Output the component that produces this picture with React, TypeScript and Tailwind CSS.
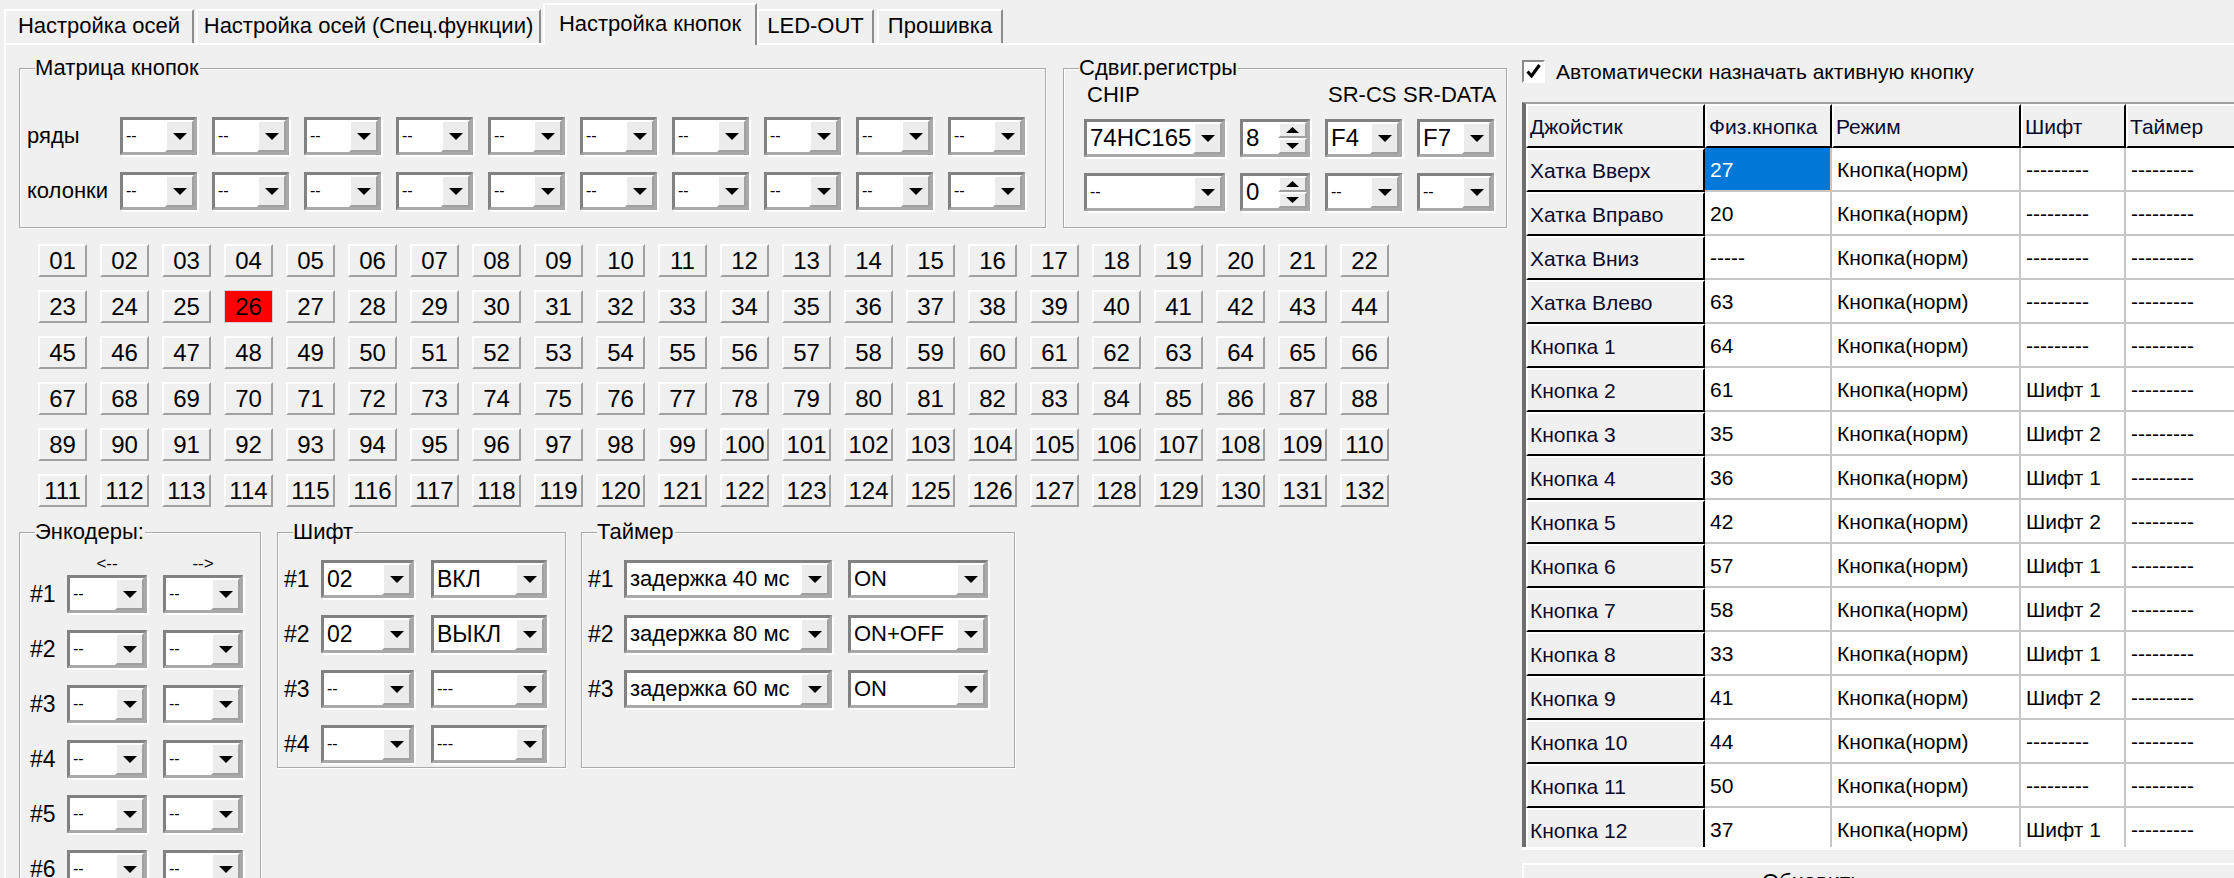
import React from 'react';

const Arrow = () => (
  <svg width="14" height="7" viewBox="0 0 14 7">
    <path d="M0 0h14L7 7z" fill="#000" />
  </svg>
);

function Combo({ w, value = '--', text = 'text-[16px]' }: { w: string; value?: string; text?: string }) {
  return (
    <div
      className={`flex h-[38px] shrink-0 border-[3px] border-[#a9a9a9] border-t-[#818181] border-l-[#818181] bg-white shadow-[2px_2px_0_#ffffff] ${w}`}
    >
      <div className={`flex flex-1 items-center overflow-hidden whitespace-nowrap pl-[3px] ${text}`}>{value}</div>
      <div className="flex w-[29px] shrink-0 items-center justify-center border-2 border-white border-r-[#a0a0a0] border-b-[#a0a0a0] bg-[#ececec]">
        <Arrow />
      </div>
    </div>
  );
}

function Spin({ value }: { value: string }) {
  return (
    <div className="flex h-[38px] w-[70px] shrink-0 border-[3px] border-[#a9a9a9] border-t-[#818181] border-l-[#818181] bg-white shadow-[2px_2px_0_#ffffff]">
      <div className="flex flex-1 items-center pl-[3px] text-[24px]">{value}</div>
      <div className="flex w-[29px] flex-col">
        <div className="flex flex-1 items-center justify-center border-2 border-white border-r-[#a0a0a0] border-b-[#a0a0a0] bg-[#ececec]">
          <svg width="13" height="6" viewBox="0 0 13 6"><path d="M0 6h13L6.5 0z" fill="#000" /></svg>
        </div>
        <div className="flex flex-1 items-center justify-center border-2 border-white border-r-[#a0a0a0] border-b-[#a0a0a0] bg-[#ececec]">
          <svg width="13" height="6" viewBox="0 0 13 6"><path d="M0 0h13L6.5 6z" fill="#000" /></svg>
        </div>
      </div>
    </div>
  );
}

function Group({ label, className, children }: { label: string; className: string; children?: React.ReactNode }) {
  return (
    <div className={`relative shrink-0 border border-[#a9a9a9] shadow-[inset_1px_1px_0_#ffffff,1px_1px_0_#ffffff] ${className}`}>
      <span className="absolute -top-[13px] left-[15px] bg-[#f0f0f0] pr-[1px] text-[22px] leading-[24px]">{label}</span>
      {children}
    </div>
  );
}

function Tab({ label, w, active }: { label: string; w: string; active?: boolean }) {
  return (
    <div
      className={`flex items-center justify-center border-t-2 border-l-2 border-r-2 border-t-white border-l-white border-r-[#8c8c8c] bg-[#f0f0f0] text-[22px] whitespace-nowrap ${w} ${
        active ? 'relative z-10 -mb-[2px] h-[42px] pb-[2px]' : 'h-[34px] pb-[2px]'
      }`}
    >
      {label}
    </div>
  );
}

const table = [
  ['Хатка Вверх', '27', '---------'],
  ['Хатка Вправо', '20', '---------'],
  ['Хатка Вниз', '-----', '---------'],
  ['Хатка Влево', '63', '---------'],
  ['Кнопка 1', '64', '---------'],
  ['Кнопка 2', '61', 'Шифт 1'],
  ['Кнопка 3', '35', 'Шифт 2'],
  ['Кнопка 4', '36', 'Шифт 1'],
  ['Кнопка 5', '42', 'Шифт 2'],
  ['Кнопка 6', '57', 'Шифт 1'],
  ['Кнопка 7', '58', 'Шифт 2'],
  ['Кнопка 8', '33', 'Шифт 1'],
  ['Кнопка 9', '41', 'Шифт 2'],
  ['Кнопка 10', '44', '---------'],
  ['Кнопка 11', '50', '---------'],
  ['Кнопка 12', '37', 'Шифт 1'],
];

const fixedCell = 'flex shrink-0 items-center border-t-2 border-l-2 border-r-2 border-b-2 border-t-white border-l-white border-r-black border-b-black bg-[#f0f0f0] pl-[2px] text-[#0a0a2e]';
const dataCell = 'flex shrink-0 items-center border-r-2 border-b-2 border-[#c6c6c6] bg-white pl-[5px]';

export default function App() {
  const buttons = Array.from({ length: 132 }, (_, i) => String(i + 1).padStart(2, '0'));

  return (
    <div className="h-[878px] w-[2234px] overflow-hidden bg-[#f0f0f0] font-['Liberation_Sans',Arial,sans-serif] leading-none text-black">
      {/* tabs */}
      <div className="flex h-[43px] items-end pl-[4px]">
        <Tab label="Настройка осей" w="w-[190px]" />
        <Tab label="Настройка осей (Спец.функции)" w="w-[345px] ml-[2px]" />
        <Tab label="Настройка кнопок" w="w-[214px] ml-[2px]" active />
        <Tab label="LED-OUT" w="w-[117px]" />
        <Tab label="Прошивка" w="w-[126px] ml-[3px]" />
      </div>

      <div className="ml-[4px] flex h-[835px] overflow-hidden border-t-2 border-l-2 border-white">
        {/* left side */}
        <div className="w-[1510px] shrink-0">
          <div className="mt-[23px] ml-[13px] flex gap-[17px]">
            <Group label="Матрица кнопок" className="h-[160px] w-[1027px] pt-[48px] pl-[7px]">
              <div className="flex h-[38px] items-center">
                <span className="w-[93px] text-[22px]">ряды</span>
                <div className="flex gap-[15px]">
                  {Array.from({ length: 10 }, (_, i) => (
                    <Combo key={i} w="w-[77px]" />
                  ))}
                </div>
              </div>
              <div className="mt-[17px] flex h-[38px] items-center">
                <span className="w-[93px] text-[22px]">колонки</span>
                <div className="flex gap-[15px]">
                  {Array.from({ length: 10 }, (_, i) => (
                    <Combo key={i} w="w-[77px]" />
                  ))}
                </div>
              </div>
            </Group>

            <Group label="Сдвиг.регистры" className="h-[160px] w-[444px] pt-[15px] pl-[20px]">
              <div className="flex h-[22px] items-center text-[22px]">
                <span className="w-[244px] pl-[3px]">CHIP</span>
                <span className="w-[75px]">SR-CS</span>
                <span>SR-DATA</span>
              </div>
              <div className="mt-[13px] flex">
                <Combo w="w-[141px]" value="74HC165" text="text-[24px]" />
                <div className="ml-[15px]"><Spin value="8" /></div>
                <div className="ml-[15px]"><Combo w="w-[77px]" value="F4" text="text-[24px]" /></div>
                <div className="ml-[15px]"><Combo w="w-[77px]" value="F7" text="text-[24px]" /></div>
              </div>
              <div className="mt-[16px] flex">
                <Combo w="w-[141px]" />
                <div className="ml-[15px]"><Spin value="0" /></div>
                <div className="ml-[15px]"><Combo w="w-[77px]" /></div>
                <div className="ml-[15px]"><Combo w="w-[77px]" /></div>
              </div>
            </Group>
          </div>

          {/* physical buttons */}
          <div className="mt-[16px] ml-[32px] grid grid-cols-[repeat(22,49px)] gap-x-[13px] gap-y-[13px]">
            {buttons.map((b) =>
              b === '26' ? (
                <div key={b} className="flex h-[33px] items-center justify-center border border-[#d0d0d0] bg-[#ff0000] text-[24px]">
                  {b}
                </div>
              ) : (
                <div
                  key={b}
                  className="flex h-[33px] items-center justify-center border-2 border-white border-r-[#a0a0a0] border-b-[#a0a0a0] bg-[#f0f0f0] text-[24px]"
                >
                  {b}
                </div>
              )
            )}
          </div>

          <div className="mt-[25px] ml-[13px] flex items-start">
            <Group label="Энкодеры:" className="h-[360px] w-[242px] pt-[19px] pl-[10px]">
              <div className="flex h-[22px] items-center text-[17px]">
                <span className="ml-[37px] w-[80px] text-center">{'<--'}</span>
                <span className="ml-[16px] w-[80px] text-center">{'-->'}</span>
              </div>
              <div className="mt-[1px] flex flex-col gap-[17px]">
                {[1, 2, 3, 4, 5, 6].map((n) => (
                  <div key={n} className="flex items-center">
                    <span className="w-[37px] text-[23px]">#{n}</span>
                    <Combo w="w-[80px]" />
                    <div className="ml-[16px]"><Combo w="w-[80px]" /></div>
                  </div>
                ))}
              </div>
            </Group>

            <Group label="Шифт" className="ml-[16px] h-[236px] w-[289px] pt-[27px] pl-[6px]">
              <div className="flex flex-col gap-[17px]">
                {[
                  ['02', 'ВКЛ'],
                  ['02', 'ВЫКЛ'],
                  ['--', '---'],
                  ['--', '---'],
                ].map(([a, b], i) => (
                  <div key={i} className="flex items-center">
                    <span className="w-[37px] text-[23px]">#{i + 1}</span>
                    <Combo w="w-[93px]" value={a} text={a === '--' ? 'text-[16px]' : 'text-[23px]'} />
                    <div className="ml-[17px]">
                      <Combo w="w-[116px]" value={b} text={b === '---' ? 'text-[16px]' : 'text-[23px]'} />
                    </div>
                  </div>
                ))}
              </div>
            </Group>

            <Group label="Таймер" className="ml-[15px] h-[236px] w-[434px] pt-[27px] pl-[6px]">
              <div className="flex flex-col gap-[17px]">
                {[
                  ['задержка 40 мс', 'ON'],
                  ['задержка 80 мс', 'ON+OFF'],
                  ['задержка 60 мс', 'ON'],
                ].map(([a, b], i) => (
                  <div key={i} className="flex items-center">
                    <span className="w-[36px] text-[23px]">#{i + 1}</span>
                    <Combo w="w-[208px]" value={a} text="text-[22px]" />
                    <div className="ml-[16px]"><Combo w="w-[140px]" value={b} text="text-[22px]" /></div>
                  </div>
                ))}
              </div>
            </Group>
          </div>
        </div>

        {/* right side */}
        <div className="min-w-0 flex-1 overflow-hidden pl-[6px]">
          <div className="mt-[15px] flex h-[23px] items-center gap-[11px]">
            <div className="flex h-[23px] w-[23px] items-center justify-center border-2 border-t-[#8a8a8a] border-l-[#8a8a8a] border-r-white border-b-white bg-white">
              <svg width="15" height="15" viewBox="0 0 15 15">
                <path d="M1.5 7.5l4 4.5 8-11" fill="none" stroke="#000" strokeWidth="3.2" />
              </svg>
            </div>
            <span className="text-[21px]">Автоматически назначать активную кнопку</span>
          </div>

          <div className="mt-[19px] h-[745px] w-[900px] overflow-hidden border-t-2 border-l-[4px] border-t-[#a0a0a0] border-l-[#6e6e6e]">
            <div className="flex h-[44px] text-[21px]">
              <div className={`${fixedCell} w-[179px]`}>Джойстик</div>
              <div className={`${fixedCell} w-[127px]`}>Физ.кнопка</div>
              <div className={`${fixedCell} w-[189px]`}>Режим</div>
              <div className={`${fixedCell} w-[105px]`}>Шифт</div>
              <div className={`${fixedCell} w-[200px]`}>Таймер</div>
            </div>
            {table.map(([name, phys, shift], i) => (
              <div key={name} className="flex h-[44px] text-[21px]">
                <div className={`${fixedCell} w-[179px]`}>{name}</div>
                <div
                  className={
                    i === 0
                      ? 'flex w-[127px] shrink-0 items-center border-r-2 border-b-2 border-[#c6c6c6] bg-[#0078d7] pl-[5px] text-white'
                      : `${dataCell} w-[127px]`
                  }
                >
                  {phys}
                </div>
                <div className={`${dataCell} w-[189px]`}>Кнопка(норм)</div>
                <div className={`${dataCell} w-[105px]`}>{shift}</div>
                <div className={`${dataCell} w-[200px]`}>---------</div>
              </div>
            ))}
          </div>
          <div className="h-[3px] bg-white" />
          <div className="mt-[13px] h-[40px] border-t-2 border-l-2 border-white pt-[6px] pl-[238px] text-[22px]">Обновить</div>
        </div>
      </div>
    </div>
  );
}
